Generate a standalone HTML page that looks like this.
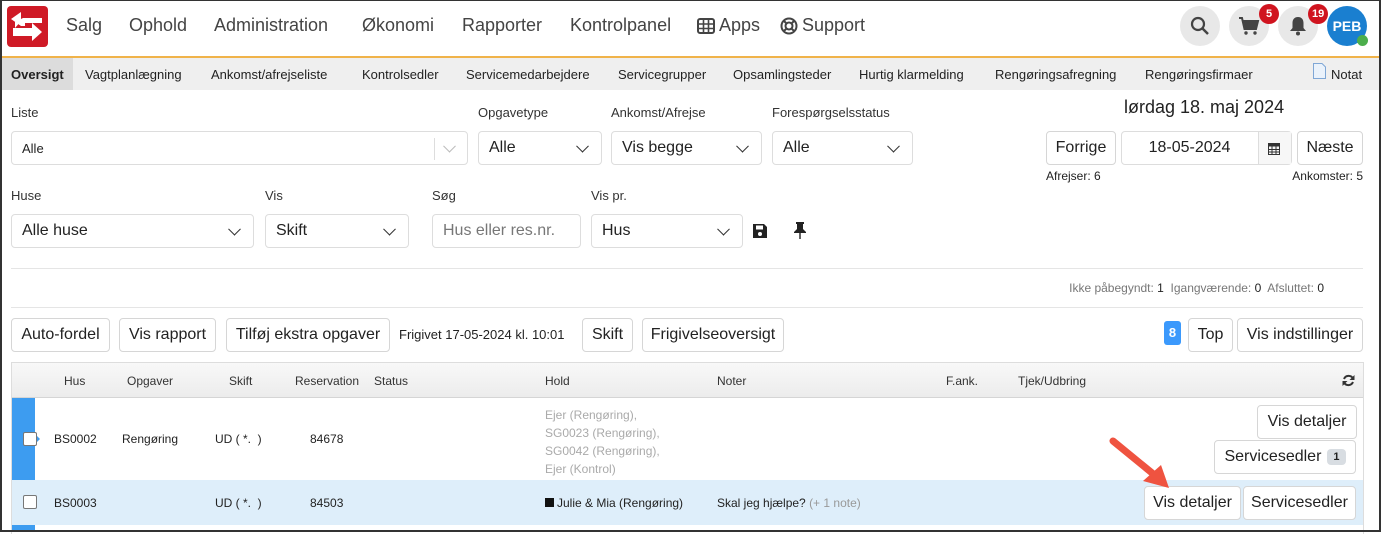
<!DOCTYPE html>
<html><head><meta charset="utf-8"><style>
*{box-sizing:border-box;margin:0;padding:0}
body{width:1381px;height:532px;overflow:hidden;background:#fff;font-family:"Liberation Sans",sans-serif;color:#222;position:relative}
.a{position:absolute;white-space:nowrap}
.nav{font-size:18px;color:#444;top:15px}
.tab{font-size:13px;color:#222;top:67px}
.lbl{font-size:13px;color:#333}
.box{position:absolute;border:1px solid #ddd;border-radius:4px;background:#fff;font-size:16px;color:#222;padding-left:10px;display:flex;align-items:center}
.chev{position:absolute;right:14px;top:50%;width:9px;height:9px;border-right:1.6px solid #333;border-bottom:1.6px solid #333;transform:translateY(-70%) rotate(45deg)}
.btn{position:absolute;border:1px solid #d6d6d6;border-radius:4px;background:#fff;font-size:16px;color:#222;display:flex;align-items:center;justify-content:center}
.th{font-size:12px;color:#333;top:374px}
.td{font-size:12px;color:#222}
.gr{font-size:12px;color:#aaa}
.cb{position:absolute;width:14px;height:14px;border:1px solid #777;border-radius:2px;background:#fff}
.circ{position:absolute;top:6px;width:40px;height:40px;border-radius:50%;background:#e8e8e8}
.badge{position:absolute;background:#d0141f;color:#fff;font-size:11px;font-weight:bold;border-radius:10px;height:20px;min-width:20px;text-align:center;line-height:20px;padding:0 4px}
</style></head><body>
<div class="a" style="left:0;top:0;width:1381px;height:532px;border:2px solid #333;border-top:1px solid #333;z-index:50;pointer-events:none"></div>
<!-- logo -->
<svg class="a" style="left:7px;top:6px" width="41" height="41" viewBox="0 0 41 41"><rect width="41" height="41" rx="4" fill="#cf1a26"/><path d="M8 22 L8 16 L16 12 L35 12 L35 17 L18 17 L18 20 L14 20 L14 15 Z" fill="#fff"/><path d="M4 13 L14 6 L14 20 Z" fill="#fff"/><path d="M6 22 L25 22 L25 17 L35 26 L25 35 L25 30 L6 30 Z" fill="#fff"/></svg>
<div class="a nav" style="left:66px">Salg</div>
<div class="a nav" style="left:129px">Ophold</div>
<div class="a nav" style="left:214px">Administration</div>
<div class="a nav" style="left:362px">Økonomi</div>
<div class="a nav" style="left:462px">Rapporter</div>
<div class="a nav" style="left:570px">Kontrolpanel</div>
<svg class="a" style="left:697px;top:18px" width="18" height="16" viewBox="0 0 18 16"><rect x="1" y="1" width="16" height="14" rx="2" fill="none" stroke="#444" stroke-width="2"/><path d="M1 6H17M1 10.5H17M6.5 1V15M11.5 1V15" stroke="#444" stroke-width="1.6"/></svg>
<div class="a nav" style="left:719px">Apps</div>
<svg class="a" style="left:780px;top:17px" width="18" height="18" viewBox="0 0 18 18"><circle cx="9" cy="9" r="7.5" fill="none" stroke="#444" stroke-width="2"/><circle cx="9" cy="9" r="3.5" fill="none" stroke="#444" stroke-width="2"/><path d="M4 4L6.5 6.5M14 4L11.5 6.5M4 14L6.5 11.5M14 14L11.5 11.5" stroke="#444" stroke-width="2"/></svg>
<div class="a nav" style="left:802px">Support</div>
<div class="circ" style="left:1180px"></div>
<svg class="a" style="left:1190px;top:16px" width="20" height="20" viewBox="0 0 20 20"><circle cx="8" cy="8" r="6" fill="none" stroke="#444" stroke-width="2.2"/><path d="M12.5 12.5L18 18" stroke="#444" stroke-width="2.5"/></svg>
<div class="circ" style="left:1229px"></div>
<svg class="a" style="left:1238px;top:16px" width="22" height="20" viewBox="0 0 22 20"><path d="M1 2H4L6.5 13H18L20 5H5" fill="none" stroke="#444" stroke-width="2"/><path d="M5.5 5H20L18 12H7Z" fill="#444"/><circle cx="8" cy="17" r="1.7" fill="#444"/><circle cx="17" cy="17" r="1.7" fill="#444"/></svg>
<div class="badge" style="left:1259px;top:4px">5</div>
<div class="circ" style="left:1278px"></div>
<svg class="a" style="left:1289px;top:16px" width="18" height="20" viewBox="0 0 18 20"><path d="M9 1C5 1 3.5 4 3.5 7V12L1 15H17L14.5 12V7C14.5 4 13 1 9 1Z" fill="#444"/><circle cx="9" cy="17.5" r="2" fill="#444"/></svg>
<div class="badge" style="left:1308px;top:4px">19</div>
<div class="a" style="left:1327px;top:6px;width:40px;height:40px;border-radius:50%;background:#1a7fd0;color:#fff;font-weight:bold;font-size:14px;text-align:center;line-height:40px">PEB</div>
<div class="a" style="left:1357px;top:35px;width:11px;height:11px;border-radius:50%;background:#4cae4c"></div>
<div class="a" style="left:0;top:56px;width:1381px;height:2px;background:#f0b34a"></div>
<div class="a" style="left:0;top:58px;width:1381px;height:32px;background:#efefef"></div>
<div class="a" style="left:0;top:58px;width:73px;height:32px;background:#dcdcdc"></div>
<div class="a tab" style="left:11px;font-weight:bold">Oversigt</div>
<div class="a tab" style="left:85px">Vagtplanlægning</div>
<div class="a tab" style="left:211px">Ankomst/afrejseliste</div>
<div class="a tab" style="left:362px">Kontrolsedler</div>
<div class="a tab" style="left:466px">Servicemedarbejdere</div>
<div class="a tab" style="left:618px">Servicegrupper</div>
<div class="a tab" style="left:733px">Opsamlingsteder</div>
<div class="a tab" style="left:859px">Hurtig klarmelding</div>
<div class="a tab" style="left:995px">Rengøringsafregning</div>
<div class="a tab" style="left:1145px">Rengøringsfirmaer</div>
<svg class="a" style="left:1313px;top:63px" width="13" height="16" viewBox="0 0 13 16"><path d="M0.5 0.5H9L12.5 4V15.5H0.5Z" fill="#eaf2fb" stroke="#7fa7d6"/></svg>
<div class="a tab" style="left:1331px">Notat</div>
<!-- filters -->
<div class="a lbl" style="left:11px;top:105px">Liste</div>
<div class="box" style="left:11px;top:131px;width:457px;height:34px;font-size:13px">Alle<div class="a" style="right:32px;top:6px;width:1px;height:22px;background:#ddd"></div><div class="chev" style="border-color:#bbb;right:13px"></div></div>
<div class="a lbl" style="left:478px;top:105px">Opgavetype</div>
<div class="box" style="left:478px;top:131px;width:124px;height:34px">Alle<div class="chev"></div></div>
<div class="a lbl" style="left:611px;top:105px">Ankomst/Afrejse</div>
<div class="box" style="left:611px;top:131px;width:151px;height:34px">Vis begge<div class="chev"></div></div>
<div class="a lbl" style="left:772px;top:105px">Forespørgselsstatus</div>
<div class="box" style="left:772px;top:131px;width:141px;height:34px">Alle<div class="chev"></div></div>
<div class="a" style="left:1124px;top:97px;font-size:18px;color:#222">lørdag 18. maj 2024</div>
<div class="btn" style="left:1046px;top:131px;width:70px;height:34px">Forrige</div>
<div class="box" style="left:1121px;top:131px;width:171px;height:34px;padding:0;justify-content:center"><span style="margin-right:34px">18-05-2024</span><div class="a" style="right:0;top:0;width:33px;height:32px;border-left:1px solid #ddd;background:#f7f7f7"></div>
<svg class="a" style="right:11px;top:10px" width="12" height="13" viewBox="0 0 12 13"><rect x="0.5" y="1.5" width="11" height="11" fill="none" stroke="#333"/><rect x="0.5" y="1.5" width="11" height="3" fill="#333"/><path d="M0.5 7.5H11.5M0.5 10H11.5M4 4.5V12.5M8 4.5V12.5" stroke="#333"/></svg></div>
<div class="btn" style="left:1297px;top:131px;width:66px;height:34px">Næste</div>
<div class="a" style="left:1046px;top:169px;font-size:12px">Afrejser: 6</div>
<div class="a" style="right:18px;top:169px;font-size:12px">Ankomster: 5</div>
<div class="a lbl" style="left:11px;top:188px">Huse</div>
<div class="box" style="left:11px;top:214px;width:243px;height:34px">Alle huse<div class="chev"></div></div>
<div class="a lbl" style="left:265px;top:188px">Vis</div>
<div class="box" style="left:265px;top:214px;width:144px;height:34px">Skift<div class="chev"></div></div>
<div class="a lbl" style="left:432px;top:188px">Søg</div>
<div class="box" style="left:432px;top:214px;width:149px;height:34px;color:#777">Hus eller res.nr.</div>
<div class="a lbl" style="left:591px;top:188px">Vis pr.</div>
<div class="box" style="left:591px;top:214px;width:152px;height:34px">Hus<div class="chev"></div></div>
<svg class="a" style="left:752px;top:223px" width="16" height="16" viewBox="0 0 16 16"><path d="M1 1H12L15 4V15H1Z" fill="#222"/><rect x="4" y="2.5" width="7" height="4" fill="#fff"/><circle cx="8" cy="11" r="2" fill="#fff"/></svg>
<svg class="a" style="left:793px;top:221px" width="14" height="19" viewBox="0 0 14 19"><path d="M3 1H11V3H10V8L13 11V12H1V11L4 8V3H3Z" fill="#222"/><rect x="6.3" y="12" width="1.4" height="6" fill="#222"/></svg>
<div class="a" style="left:11px;top:268px;width:1352px;height:1px;background:#e5e5e5"></div>
<div class="a" style="right:57px;top:281px;font-size:12px;color:#777">Ikke påbegyndt: <span style="color:#222">1</span>&nbsp; Igangværende: <span style="color:#222">0</span>&nbsp; Afsluttet: <span style="color:#222">0</span></div>
<div class="a" style="left:11px;top:307px;width:1352px;height:1px;background:#e5e5e5"></div>
<div class="btn" style="left:11px;top:318px;width:99px;height:34px">Auto-fordel</div>
<div class="btn" style="left:119px;top:318px;width:97px;height:34px">Vis rapport</div>
<div class="btn" style="left:226px;top:318px;width:164px;height:34px">Tilføj ekstra opgaver</div>
<div class="a" style="left:399px;top:327px;font-size:13px">Frigivet 17-05-2024 kl. 10:01</div>
<div class="btn" style="left:582px;top:318px;width:51px;height:34px">Skift</div>
<div class="btn" style="left:642px;top:318px;width:142px;height:34px">Frigivelseoversigt</div>
<div class="a" style="left:1164px;top:321px;width:17px;height:24px;background:#3b99fc;border-radius:3px;color:#fff;font-size:13px;font-weight:bold;text-align:center;line-height:24px">8</div>
<div class="btn" style="left:1188px;top:318px;width:45px;height:34px">Top</div>
<div class="btn" style="left:1237px;top:318px;width:126px;height:34px">Vis indstillinger</div>
<!-- table -->
<div class="a" style="left:11px;top:362px;width:1353px;height:172px;border:1px solid #ddd;border-bottom:none"></div>
<div class="a" style="left:12px;top:363px;width:1351px;height:35px;background:linear-gradient(#f8f8f8,#ececec);border-bottom:1px solid #d5d5d5"></div>
<div class="a th" style="left:64px">Hus</div>
<div class="a th" style="left:127px">Opgaver</div>
<div class="a th" style="left:229px">Skift</div>
<div class="a th" style="left:295px">Reservation</div>
<div class="a th" style="left:374px">Status</div>
<div class="a th" style="left:545px">Hold</div>
<div class="a th" style="left:717px">Noter</div>
<div class="a th" style="left:946px">F.ank.</div>
<div class="a th" style="left:1018px">Tjek/Udbring</div>
<svg class="a" style="left:1342px;top:374px" width="13" height="13" viewBox="0 0 13 13"><path d="M11 4.5A5 5 0 0 0 2 5M2 8.5A5 5 0 0 0 11 8" fill="none" stroke="#333" stroke-width="2"/><path d="M12.5 1V6H7.5Z" fill="#333"/><path d="M0.5 12V7H5.5Z" fill="#333"/></svg>
<div class="a" style="left:12px;top:398px;width:23px;height:82px;background:#3d9cf0"></div>
<div class="a" style="left:35px;top:434px;width:0;height:0;border-top:5px solid transparent;border-bottom:5px solid transparent;border-left:5px solid #3d9cf0"></div>
<div class="cb" style="left:23px;top:432px"></div>
<div class="a td" style="left:54px;top:432px">BS0002</div>
<div class="a td" style="left:122px;top:432px">Rengøring</div>
<div class="a td" style="left:215px;top:432px">UD ( *.&nbsp; )</div>
<div class="a td" style="left:310px;top:432px">84678</div>
<div class="a gr" style="left:545px;top:406px;line-height:18px">Ejer (Rengøring),<br>SG0023 (Rengøring),<br>SG0042 (Rengøring),<br>Ejer (Kontrol)</div>
<div class="btn" style="left:1257px;top:405px;width:100px;height:34px">Vis detaljer</div>
<div class="btn" style="left:1214px;top:440px;width:142px;height:34px">Servicesedler <span style="margin-left:6px;background:#d8dde2;border-radius:4px;font-size:11px;font-weight:bold;padding:2px 6px">1</span></div>
<div class="a" style="left:12px;top:480px;width:1351px;height:45px;background:#deeefa"></div>
<div class="cb" style="left:23px;top:495px"></div>
<div class="a td" style="left:54px;top:496px">BS0003</div>
<div class="a td" style="left:215px;top:496px">UD ( *.&nbsp; )</div>
<div class="a td" style="left:310px;top:496px">84503</div>
<div class="a td" style="left:545px;top:496px"><span style="display:inline-block;width:9px;height:9px;background:#111;margin-right:3px"></span>Julie &amp; Mia (Rengøring)</div>
<div class="a td" style="left:717px;top:496px">Skal jeg hjælpe? <span style="color:#999">(+ 1 note)</span></div>
<div class="btn" style="left:1144px;top:486px;width:97px;height:34px">Vis detaljer</div>
<div class="btn" style="left:1243px;top:486px;width:113px;height:34px">Servicesedler</div>
<div class="a" style="left:12px;top:525px;width:23px;height:7px;background:#3d9cf0"></div>
<svg class="a" style="left:1105px;top:433px" width="70" height="60" viewBox="0 0 70 60"><path d="M8 8L52 44" stroke="#ef5340" stroke-width="7" stroke-linecap="round"/><path d="M64 55L38 48L56 32Z" fill="#ef5340"/></svg>
</body></html>
